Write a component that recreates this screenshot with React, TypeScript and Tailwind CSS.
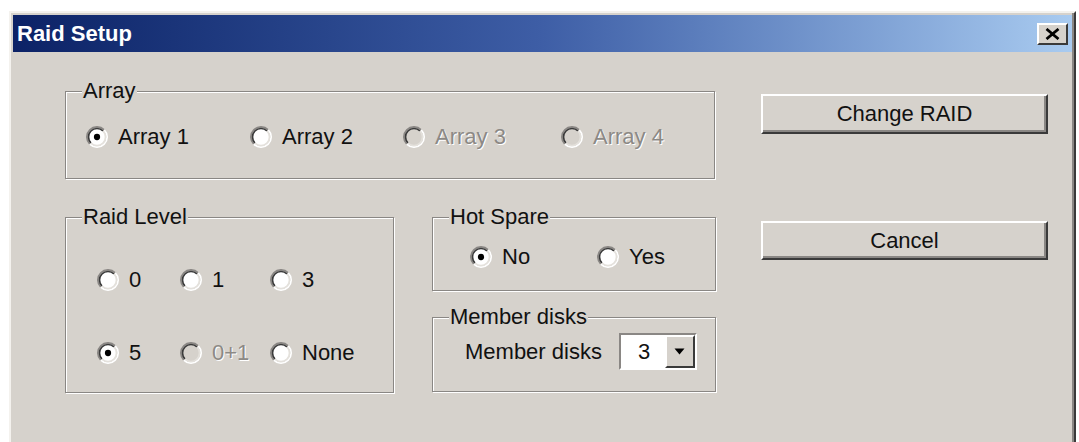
import React from "react";

// Classic Windows radio button, drawn at 22px
function Radio({ checked = false, disabled = false }: { checked?: boolean; disabled?: boolean }) {
  return (
    <svg width="22" height="22" viewBox="0 0 21 21" className="shrink-0">
      <circle cx="10.5" cy="10.5" r="8.5" fill={disabled ? "#d6d2cc" : "#ffffff"} />
      <path d="M3.64 17.36 A9.7 9.7 0 0 1 17.36 3.64" stroke="#8a8784" strokeWidth="1.6" fill="none" />
      <path d="M17.36 3.64 A9.7 9.7 0 0 1 3.64 17.36" stroke="#ffffff" strokeWidth="1.6" fill="none" />
      <path d="M4.77 16.23 A8.1 8.1 0 0 1 16.23 4.77" stroke="#3a3a3a" strokeWidth="1.6" fill="none" />
      <path d="M16.23 4.77 A8.1 8.1 0 0 1 4.77 16.23" stroke="#e4e1dc" strokeWidth="1.6" fill="none" />
      {checked && <circle cx="10.5" cy="10.5" r="3" fill="#000000" />}
    </svg>
  );
}

function RadioItem({
  label,
  checked = false,
  disabled = false,
  className = "",
}: {
  label: string;
  checked?: boolean;
  disabled?: boolean;
  className?: string;
}) {
  return (
    <div className={`flex items-center gap-[10px] h-[26px] ${className}`}>
      <Radio checked={checked} disabled={disabled} />
      <span
        className={
          disabled
            ? "text-[#8c8985] [text-shadow:1px_1px_0_#ffffff] leading-[26px]"
            : "text-[#111111] leading-[26px]"
        }
      >
        {label}
      </span>
    </div>
  );
}

// Etched group box with its caption sitting on the top line
function Group({
  label,
  className = "",
  children,
}: {
  label: string;
  className?: string;
  children?: React.ReactNode;
}) {
  return (
    <div
      className={`relative border border-[#8a8784] shadow-[inset_1px_1px_0_#ffffff,1px_1px_0_#ffffff] ${className}`}
    >
      <span className="absolute -top-[13px] left-[16px] bg-[#d6d2cc] px-[1px] leading-[24px] text-[#111111]">
        {label}
      </span>
      {children}
    </div>
  );
}

function PushButton({ label, className = "" }: { label: string; className?: string }) {
  return (
    <button
      type="button"
      className={`w-[287px] bg-[#d6d2cc] border-t-2 border-l-2 border-r-2 border-b-2 border-t-white border-l-white border-r-[#3a3a3a] border-b-[#3a3a3a] shadow-[inset_-2px_-2px_0_#8a8784] text-[22px] leading-[24px] text-[#111111] flex items-center justify-center ${className}`}
    >
      {label}
    </button>
  );
}

export default function App() {
  return (
    <div className="w-[1079px] h-[442px] overflow-hidden bg-white pl-[9px] pt-[11px] font-['Liberation_Sans',Arial,sans-serif] text-[22px]">
      <div className="w-[1067px] h-[440px] bg-[#d6d2cc] border-t-2 border-l-2 border-r-2 border-b-2 border-t-[#f4f2ee] border-l-[#f4f2ee] border-r-[#3a3a3a] border-b-[#3a3a3a] shadow-[inset_-2px_-2px_0_#8a8784] p-[2px]">
        {/* Title bar */}
        <div className="h-[37px] flex items-center justify-between pl-[4px] pr-[4px] bg-linear-to-r from-[#0c2266] via-[#3e5ea6] to-[#a9cbf0]">
          <span className="text-white font-bold text-[22px] leading-[24px]">Raid Setup</span>
          <div className="w-[31px] h-[22px] bg-[#d6d2cc] border-t-2 border-l-2 border-r-2 border-b-2 border-t-white border-l-white border-r-[#3a3a3a] border-b-[#3a3a3a] flex items-center justify-center">
            <svg width="15" height="12" viewBox="0 0 15 12">
              <path d="M1.5 1 L13.5 11 M13.5 1 L1.5 11" stroke="#000" strokeWidth="2.8" />
            </svg>
          </div>
        </div>

        {/* Dialog body */}
        <div className="flex pl-[52px] pt-[39px]">
          <div className="flex flex-col">
            <Group label="Array" className="w-[650px] h-[88px] flex items-center pl-[20px] pt-[4px]">
              <RadioItem label="Array 1" checked className="w-[164px]" />
              <RadioItem label="Array 2" className="w-[153px]" />
              <RadioItem label="Array 3" disabled className="w-[158px]" />
              <RadioItem label="Array 4" disabled />
            </Group>

            <div className="flex gap-[38px] mt-[38px]">
              <Group
                label="Raid Level"
                className="w-[329px] h-[176px] grid grid-cols-[83px_90px_1fr] content-start gap-y-[47px] pl-[31px] pt-[49px]"
              >
                <RadioItem label="0" />
                <RadioItem label="1" />
                <RadioItem label="3" />
                <RadioItem label="5" checked />
                <RadioItem label="0+1" disabled />
                <RadioItem label="None" />
              </Group>

              <div className="flex flex-col gap-[26px]">
                <Group label="Hot Spare" className="w-[284px] h-[74px] flex items-start pl-[37px] pt-[26px]">
                  <RadioItem label="No" checked className="w-[127px]" />
                  <RadioItem label="Yes" />
                </Group>
                <Group label="Member disks" className="w-[284px] h-[75px] flex items-start pl-[32px] pt-[15px]">
                  <div className="flex items-center gap-[17px] h-[37px]">
                    <span className="leading-[26px] text-[#111111]">Member disks</span>
                    <div className="w-[78px] h-[37px] flex border-t-2 border-l-2 border-r-2 border-b-2 border-t-[#8a8784] border-l-[#8a8784] border-r-white border-b-white">
                      <div className="flex-1 bg-white flex items-center pl-[17px] leading-[26px] text-[#111111]">3</div>
                      <div className="w-[30px] bg-[#d6d2cc] border-t-2 border-l-2 border-r-2 border-b-2 border-t-white border-l-white border-r-[#3a3a3a] border-b-[#3a3a3a] flex items-center justify-center">
                        <svg width="11" height="7" viewBox="0 0 11 7">
                          <path d="M0.5 0.5 L10.5 0.5 L5.5 6.5 Z" fill="#000" />
                        </svg>
                      </div>
                    </div>
                  </div>
                </Group>
              </div>
            </div>
          </div>

          {/* Action buttons */}
          <div className="flex flex-col ml-[45px] mt-[3px]">
            <PushButton label="Change RAID" className="h-[40px]" />
            <PushButton label="Cancel" className="h-[39px] mt-[87px]" />
          </div>
        </div>
      </div>
    </div>
  );
}
